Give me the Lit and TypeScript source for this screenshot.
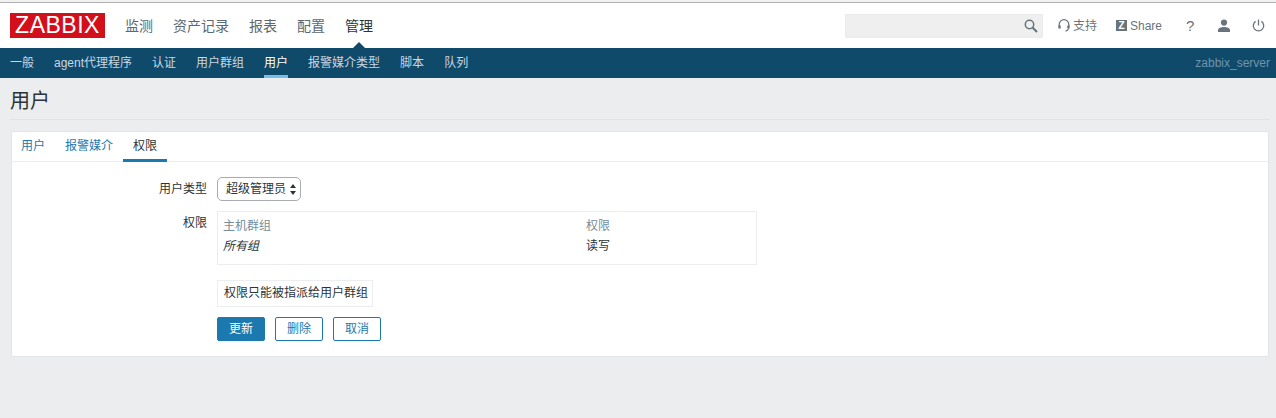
import { LitElement, css, html } from "lit";
import { customElement } from "lit/decorators.js";

const TOP_MENU = ["监测", "资产记录", "报表", "配置", "管理"];
const SUB_MENU = ["一般", "agent代理程序", "认证", "用户群组", "用户", "报警媒介类型", "脚本", "队列"];

@customElement("app-root")
export class AppRoot extends LitElement {
  static styles = css`
    :host {
      display: block;
      height: 418px;
      overflow: hidden;
      background: #ebedef;
      color: #2b3438;
      font: 12px/16px "Liberation Sans", "Noto Sans CJK SC", sans-serif;
    }
    .strip {
      height: 3px;
      box-sizing: border-box;
      background: #f1f1f1;
      border-bottom: 1px solid #b0b0b0;
    }
    .top {
      height: 45px;
      background: #fff;
      display: flex;
      align-items: center;
      padding: 0 11px 0 10px;
    }
    .logo {
      width: 95px;
      height: 25px;
      background: #d40f1c;
      color: #fff;
      font-size: 23px;
      line-height: 25px;
      text-align: center;
      letter-spacing: 0.5px;
      margin-right: 20px;
      flex: none;
    }
    .menu {
      display: flex;
      gap: 20px;
      font-size: 14px;
      color: #5c6770;
      flex: 1;
    }
    .menu .on {
      color: #2b3438;
      position: relative;
    }
    .menu .on::after {
      content: "";
      position: absolute;
      left: 50%;
      top: 24px;
      margin-left: -6px;
      border: 6px solid transparent;
      border-top: 0;
      border-bottom-color: #0f4a6b;
    }
    .search {
      width: 198px;
      height: 24px;
      box-sizing: border-box;
      background: #efefef;
      border: 1px solid #ebebeb;
      display: flex;
      align-items: center;
      justify-content: flex-end;
      padding-right: 4px;
      margin-right: 15px;
    }
    .tools {
      display: flex;
      align-items: center;
      color: #68747c;
      font-size: 12px;
    }
    .tools svg {
      display: block;
    }
    .tool {
      display: flex;
      align-items: center;
      gap: 3px;
    }
    .tool.support {
      width: 58px;
    }
    .tool.share {
      width: 70px;
    }
    .tool.help {
      width: 31px;
      font-size: 15px;
    }
    .tool.user {
      width: 35px;
    }
    .z {
      width: 11px;
      height: 11px;
      background: #68747c;
      color: #fff;
      font-size: 10px;
      line-height: 11px;
      font-weight: 700;
      text-align: center;
    }
    .sub {
      height: 30px;
      background: #0f4a6b;
      display: flex;
      padding: 0 6px 0 10px;
      gap: 20px;
      color: #c9d8e2;
      line-height: 30px;
    }
    .sub a {
      height: 30px;
      box-sizing: border-box;
    }
    .sub .on {
      color: #fff;
      border-bottom: 3px solid #78bce4;
    }
    .server {
      margin-left: auto;
      color: #6f94ab;
    }
    .head {
      margin: 0 7px 0 10px;
      height: 41px;
      border-bottom: 1px solid #dfe3e5;
      font-size: 20px;
      line-height: 46px;
    }
    .card {
      margin: 11px 7px 0 11px;
      height: 226px;
      box-sizing: border-box;
      background: #fff;
      border: 1px solid #e2e5e7;
    }
    .tabs {
      height: 30px;
      box-sizing: border-box;
      border-bottom: 1px solid #ebedef;
      display: flex;
      margin-left: -1px;
      color: #1b79b0;
      line-height: 29px;
    }
    .tabs span {
      padding: 0 10px;
      height: 30px;
      box-sizing: border-box;
    }
    .tabs .on {
      color: #2b3438;
      border-bottom: 3px solid #1b79b0;
    }
    .row {
      display: grid;
      grid-template-columns: 195px auto;
      column-gap: 10px;
      justify-content: start;
    }
    .row.type {
      margin-top: 15px;
      line-height: 24px;
    }
    .row.perms {
      margin-top: 10px;
    }
    .row.perms .label {
      line-height: 25px;
    }
    .row.info {
      margin-top: 15px;
    }
    .row.actions {
      margin-top: 10px;
    }
    .label {
      text-align: right;
    }
    .select {
      width: 84px;
      height: 24px;
      box-sizing: border-box;
      border: 1px solid #a7adb1;
      border-radius: 5px;
      display: flex;
      align-items: center;
      justify-content: space-between;
      padding: 0 4px 0 8px;
    }
    .perm {
      width: 540px;
      height: 54px;
      box-sizing: border-box;
      border: 1px solid #ebedef;
      padding: 4px 5px;
      display: grid;
      grid-template-columns: 363px auto;
      grid-auto-rows: 20px;
      align-items: center;
    }
    .perm .th {
      color: #768d99;
    }
    .perm i {
      font-style: italic;
    }
    .note {
      width: 156px;
      height: 27px;
      box-sizing: border-box;
      border: 1px solid #ebedef;
      padding-left: 6px;
      line-height: 25px;
      white-space: nowrap;
    }
    .btns {
      display: flex;
      gap: 10px;
    }
    .btn {
      width: 48px;
      height: 24px;
      box-sizing: border-box;
      border: 1px solid #1b79b0;
      border-radius: 2px;
      color: #1b79b0;
      text-align: center;
      line-height: 22px;
    }
    .btn.primary {
      background: #1b79b0;
      color: #fff;
    }
  `;

  render() {
    return html`
      <div class="strip"></div>
      <div class="top">
        <div class="logo">ZABBIX</div>
        <nav class="menu">
          ${TOP_MENU.map((m) => html`<span class=${m === "管理" ? "on" : ""}>${m}</span>`)}
        </nav>
        <div class="search">
          <svg width="14" height="14" viewBox="0 0 14 14" fill="none" stroke="#68747c" stroke-width="1.5">
            <circle cx="5.5" cy="5.5" r="4.2"></circle>
            <path d="M8.7 8.7L13 13" stroke-width="2"></path>
          </svg>
        </div>
        <div class="tools">
          <span class="tool support">
            <svg width="12" height="13" viewBox="0 0 12 13" fill="none" stroke="#68747c" stroke-width="1.3">
              <path d="M1.2 7V5.5a4.8 4.8 0 0 1 9.6 0V7"></path>
              <path d="M1.5 6.5v3M10.5 6.5v3" stroke-width="2.4"></path>
              <path d="M10.4 9.5Q10 12 7.5 12"></path>
            </svg>
            支持
          </span>
          <span class="tool share">
            <span class="z">Z</span>
            <span>Share</span>
          </span>
          <span class="tool help">?</span>
          <span class="tool user">
            <svg width="14" height="13" viewBox="0 0 14 13" fill="#68747c">
              <circle cx="7" cy="3.6" r="3.1"></circle>
              <path d="M1 13v-1.6C1 9 4 8 7 8s6 1 6 3.4V13z"></path>
            </svg>
          </span>
          <span class="tool">
            <svg width="13" height="13" viewBox="0 0 13 13" fill="none" stroke="#68747c" stroke-width="1.3">
              <path d="M6.5 .5v6"></path>
              <path d="M3.6 2.4a5.2 5.2 0 1 0 5.8 0"></path>
            </svg>
          </span>
        </div>
      </div>
      <nav class="sub">
        ${SUB_MENU.map((m) => html`<a class=${m === "用户" ? "on" : ""}>${m}</a>`)}
        <span class="server">zabbix_server</span>
      </nav>
      <div class="head">用户</div>
      <div class="card">
        <div class="tabs">
          <span>用户</span>
          <span>报警媒介</span>
          <span class="on">权限</span>
        </div>
        <div class="row type">
          <div class="label">用户类型</div>
          <div class="select">
            超级管理员
            <svg width="6" height="11" viewBox="0 0 6 11" fill="#2b3438">
              <path d="M3 0l3 4H0zM3 11L0 7h6z"></path>
            </svg>
          </div>
        </div>
        <div class="row perms">
          <div class="label">权限</div>
          <div class="perm">
            <span class="th">主机群组</span><span class="th">权限</span>
            <i>所有组</i><span>读写</span>
          </div>
        </div>
        <div class="row info">
          <div></div>
          <div class="note">权限只能被指派给用户群组</div>
        </div>
        <div class="row actions">
          <div></div>
          <div class="btns">
            <span class="btn primary">更新</span>
            <span class="btn">删除</span>
            <span class="btn">取消</span>
          </div>
        </div>
      </div>
    `;
  }
}
